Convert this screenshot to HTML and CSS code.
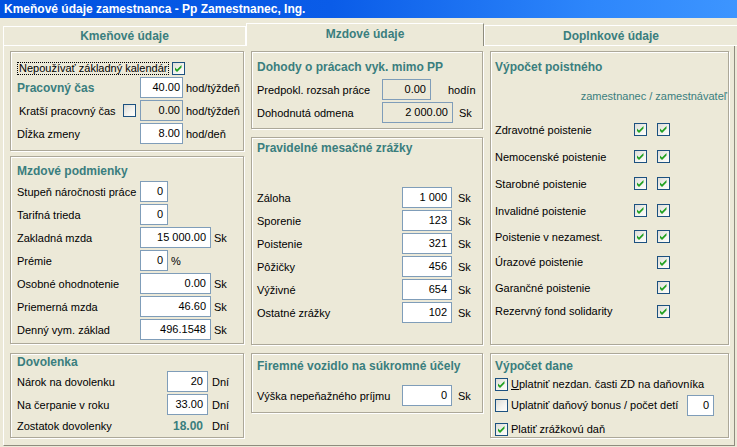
FILE: index.html
```html
<!DOCTYPE html>
<html lang="sk">
<head>
<meta charset="utf-8">
<title>Kmeňové údaje zamestnanca</title>
<link rel="stylesheet" href="styles.css">
</head>
<body>
<div class="titlebar">Kmeňové údaje zamestnanca - Pp Zamestnanec, Ing.</div>
<div class="tabs">
  <div class="tab tab-1">Kmeňové údaje</div>
  <div class="tab tab-2">Mzdové údaje</div>
  <div class="tab tab-3">Doplnkové údaje</div>
</div>
<div class="panel">
  <div class="col col-1">
    <div class="group g-kmen">
      <div class="row row-check">
        <span class="focus">Nepoužívať základný kalendár</span>
        <span class="cb cb-after"><svg viewBox="0 0 11 11" width="11" height="11"><path d="M2 4.5 L4 6.5 L8.5 2 L8.5 4.5 L4 9 L2 7 Z" fill="#21a121"/></svg></span>
      </div>
      <div class="row"><span class="lbl w123 head">Pracovný čas</span><span class="inp w43 tight">40.00</span><span class="unit">hod/týždeň</span></div>
      <div class="row"><span class="lbl w123 lbl-cb"><span class="ind">Kratší pracovný čas</span><span class="cb"></span></span><span class="inp w43 tight dis">0.00</span><span class="unit">hod/týždeň</span></div>
      <div class="row"><span class="lbl w123">Dĺžka zmeny</span><span class="inp w43 tight">8.00</span><span class="unit">hod/deň</span></div>
    </div>
    <div class="group g-podm">
      <div class="gt">Mzdové podmienky</div>
      <div class="row"><span class="lbl w123">Stupeň náročnosti práce</span><span class="inp w28">0</span></div>
      <div class="row"><span class="lbl w123">Tarifná trieda</span><span class="inp w28">0</span></div>
      <div class="row"><span class="lbl w123">Zakladná mzda</span><span class="inp w70">15 000.00</span><span class="unit">Sk</span></div>
      <div class="row"><span class="lbl w123">Prémie</span><span class="inp w28">0</span><span class="unit">%</span></div>
      <div class="row"><span class="lbl w123">Osobné ohodnotenie</span><span class="inp w70">0.00</span><span class="unit">Sk</span></div>
      <div class="row"><span class="lbl w123">Priemerná mzda</span><span class="inp w70">46.60</span><span class="unit">Sk</span></div>
      <div class="row"><span class="lbl w123">Denný vym. základ</span><span class="inp w70">496.1548</span><span class="unit">Sk</span></div>
    </div>
    <div class="group g-dov">
      <div class="gt">Dovolenka</div>
      <div class="row"><span class="lbl w150">Nárok na dovolenku</span><span class="inp w41">20</span><span class="unit u4">Dní</span></div>
      <div class="row"><span class="lbl w150">Na čerpanie v roku</span><span class="inp w41">33.00</span><span class="unit u4">Dní</span></div>
      <div class="row row-last"><span class="lbl w150">Zostatok dovolenky</span><span class="val w41">18.00</span><span class="unit u4">Dní</span></div>
    </div>
  </div>

  <div class="col col-2">
    <div class="group g-doh">
      <div class="gt">Dohody o prácach vyk. mimo PP</div>
      <div class="row"><span class="lbl w125">Predpokl. rozsah práce</span><span class="inp w49 dis">0.00</span><span class="unit u17">hodín</span></div>
      <div class="row"><span class="lbl w125">Dohodnutá odmena</span><span class="inp w70 dis">2 000.00</span><span class="unit u6">Sk</span></div>
    </div>
    <div class="group g-zraz">
      <div class="gt">Pravidelné mesačné zrážky</div>
      <div class="row"><span class="lbl w145">Záloha</span><span class="inp w50">1 000</span><span class="unit u6">Sk</span></div>
      <div class="row"><span class="lbl w145">Sporenie</span><span class="inp w50">123</span><span class="unit u6">Sk</span></div>
      <div class="row"><span class="lbl w145">Poistenie</span><span class="inp w50">321</span><span class="unit u6">Sk</span></div>
      <div class="row"><span class="lbl w145">Pôžičky</span><span class="inp w50">456</span><span class="unit u6">Sk</span></div>
      <div class="row"><span class="lbl w145">Výživné</span><span class="inp w50">654</span><span class="unit u6">Sk</span></div>
      <div class="row"><span class="lbl w145">Ostatné zrážky</span><span class="inp w50">102</span><span class="unit u6">Sk</span></div>
    </div>
    <div class="group g-voz">
      <div class="gt">Firemné vozidlo na súkromné účely</div>
      <div class="row"><span class="lbl w145">Výška nepeňažného príjmu</span><span class="inp w50">0</span><span class="unit u6">Sk</span></div>
    </div>
  </div>

  <div class="col col-3">
    <div class="group g-poist">
      <div class="gt">Výpočet poistného</div>
      <div class="sub">zamestnanec / zamestnávateľ</div>
      <div class="rows-p">
        <div class="row-p"><span class="lbl w139">Zdravotné poistenie</span><span class="cb"><svg viewBox="0 0 11 11" width="11" height="11"><path d="M2 4.5 L4 6.5 L8.5 2 L8.5 4.5 L4 9 L2 7 Z" fill="#21a121"/></svg></span><span class="cb cb-2"><svg viewBox="0 0 11 11" width="11" height="11"><path d="M2 4.5 L4 6.5 L8.5 2 L8.5 4.5 L4 9 L2 7 Z" fill="#21a121"/></svg></span></div>
        <div class="row-p"><span class="lbl w139">Nemocenské poistenie</span><span class="cb"><svg viewBox="0 0 11 11" width="11" height="11"><path d="M2 4.5 L4 6.5 L8.5 2 L8.5 4.5 L4 9 L2 7 Z" fill="#21a121"/></svg></span><span class="cb cb-2"><svg viewBox="0 0 11 11" width="11" height="11"><path d="M2 4.5 L4 6.5 L8.5 2 L8.5 4.5 L4 9 L2 7 Z" fill="#21a121"/></svg></span></div>
        <div class="row-p"><span class="lbl w139">Starobné poistenie</span><span class="cb"><svg viewBox="0 0 11 11" width="11" height="11"><path d="M2 4.5 L4 6.5 L8.5 2 L8.5 4.5 L4 9 L2 7 Z" fill="#21a121"/></svg></span><span class="cb cb-2"><svg viewBox="0 0 11 11" width="11" height="11"><path d="M2 4.5 L4 6.5 L8.5 2 L8.5 4.5 L4 9 L2 7 Z" fill="#21a121"/></svg></span></div>
        <div class="row-p"><span class="lbl w139">Invalidné poistenie</span><span class="cb"><svg viewBox="0 0 11 11" width="11" height="11"><path d="M2 4.5 L4 6.5 L8.5 2 L8.5 4.5 L4 9 L2 7 Z" fill="#21a121"/></svg></span><span class="cb cb-2"><svg viewBox="0 0 11 11" width="11" height="11"><path d="M2 4.5 L4 6.5 L8.5 2 L8.5 4.5 L4 9 L2 7 Z" fill="#21a121"/></svg></span></div>
        <div class="row-p"><span class="lbl w139">Poistenie v nezamest.</span><span class="cb"><svg viewBox="0 0 11 11" width="11" height="11"><path d="M2 4.5 L4 6.5 L8.5 2 L8.5 4.5 L4 9 L2 7 Z" fill="#21a121"/></svg></span><span class="cb cb-2"><svg viewBox="0 0 11 11" width="11" height="11"><path d="M2 4.5 L4 6.5 L8.5 2 L8.5 4.5 L4 9 L2 7 Z" fill="#21a121"/></svg></span></div>
        <div class="row-p"><span class="lbl w139">Úrazové poistenie</span><span class="cb cb-none"></span><span class="cb cb-2"><svg viewBox="0 0 11 11" width="11" height="11"><path d="M2 4.5 L4 6.5 L8.5 2 L8.5 4.5 L4 9 L2 7 Z" fill="#21a121"/></svg></span></div>
        <div class="row-p"><span class="lbl w139">Garančné poistenie</span><span class="cb cb-none"></span><span class="cb cb-2"><svg viewBox="0 0 11 11" width="11" height="11"><path d="M2 4.5 L4 6.5 L8.5 2 L8.5 4.5 L4 9 L2 7 Z" fill="#21a121"/></svg></span></div>
        <div class="row-p"><span class="lbl w139">Rezervný fond solidarity</span><span class="cb cb-none"></span><span class="cb cb-2"><svg viewBox="0 0 11 11" width="11" height="11"><path d="M2 4.5 L4 6.5 L8.5 2 L8.5 4.5 L4 9 L2 7 Z" fill="#21a121"/></svg></span></div>
      </div>
    </div>
    <div class="group g-dan">
      <div class="gt">Výpočet dane</div>
      <div class="row row-d1"><span class="cb"><svg viewBox="0 0 11 11" width="11" height="11"><path d="M2 4.5 L4 6.5 L8.5 2 L8.5 4.5 L4 9 L2 7 Z" fill="#21a121"/></svg></span><span class="cb-lbl"><u>U</u>platniť nezdan. časti ZD na daňovníka</span></div>
      <div class="row row-d2"><span class="cb"></span><span class="cb-lbl w176">Uplatniť daňový bonus / počet detí</span><span class="inp w27">0</span></div>
      <div class="row row-d3"><span class="cb"><svg viewBox="0 0 11 11" width="11" height="11"><path d="M2 4.5 L4 6.5 L8.5 2 L8.5 4.5 L4 9 L2 7 Z" fill="#21a121"/></svg></span><span class="cb-lbl">Platiť zrážkovú daň</span></div>
    </div>
  </div>
</div>
</body>
</html>
```

FILE: styles.css
```css
* { box-sizing: border-box; }
html, body { margin: 0; padding: 0; }
body {
  width: 737px;
  height: 447px;
  overflow: hidden;
  background: #ece9d8;
  font-family: "Liberation Sans", Arial, sans-serif;
  font-size: 11px;
  color: #000;
}

.titlebar {
  height: 18px;
  line-height: 18px;
  padding-left: 4px;
  color: #fff;
  font-weight: bold;
  font-size: 12px;
  white-space: nowrap;
  background: linear-gradient(to right, #0052e0 0%, #0a5ce8 45%, #2d86fb 80%, #3d95ff 100%);
}

.tabs {
  display: flex;
  align-items: flex-end;
  height: 23px;
  margin-top: 5px;
  padding-left: 3px;
}
.tab {
  display: flex;
  align-items: center;
  justify-content: center;
  font-weight: bold;
  font-size: 12px;
  color: #3a7e7e;
  border-top: 1px solid #fff;
  border-left: 1px solid #fff;
  white-space: nowrap;
}
.tab-1 { width: 243px; height: 20px; border-right: 1px solid #fff; border-bottom: 1px solid #fff; }
.tab-2 { width: 238px; height: 23px; border-right: 1px solid #8e8c7e; padding-bottom: 2px; }
.tab-3 { width: 253px; height: 21px; border-bottom: 1px solid #fff; }

.panel {
  display: flex;
  gap: 7px;
  width: 732px;
  height: 400px;
  margin-left: 3px;
  padding: 5px 0 0 6px;
  border-left: 1px solid #fff;
  border-right: 1px solid #8e8c7e;
  border-bottom: 1px solid #8e8c7e;
}
.col { display: flex; flex-direction: column; }
.col-1 { width: 234px; }
.col-2 { width: 232px; }
.col-3 { width: 239px; }

.group {
  border: 1px solid #aca899;
  box-shadow: inset 1px 1px 0 #fff, 1px 1px 0 #fff;
  flex: none;
}
.col-1 .group { padding-left: 6px; }
.col-2 .group { padding-left: 5px; }
.col-3 .group { padding-left: 4px; }

.gt {
  font-weight: bold;
  font-size: 12px;
  color: #3a7e7e;
  line-height: 16px;
  height: 16px;
  white-space: nowrap;
}

.row {
  display: flex;
  align-items: center;
  height: 23px;
  white-space: nowrap;
}

.lbl { flex: none; white-space: nowrap; }
.w123 { width: 123px; }
.w125 { width: 125px; }
.w139 { width: 139px; }
.w145 { width: 145px; }
.w150 { width: 150px; }
.w176 { width: 176px; }

.head { font-weight: bold; font-size: 12px; color: #3a7e7e; }
.lbl-cb { display: flex; align-items: center; }
.lbl-cb .ind { padding-left: 2px; }
.lbl-cb .cb { margin-left: auto; margin-right: 4px; }

.inp {
  flex: none;
  display: block;
  height: 21px;
  line-height: 19px;
  border: 1px solid #7f9db9;
  background: #fff;
  text-align: right;
  padding-right: 4px;
}
.inp.tight { padding-right: 2px; }
.inp.dis { background: #ece9d8; }
.w27 { width: 27px; }
.w28 { width: 28px; }
.w41 { width: 41px; }
.w43 { width: 43px; }
.w49 { width: 49px; }
.w50 { width: 50px; }
.w70 { width: 71px; }

.val {
  flex: none;
  text-align: right;
  padding-right: 5px;
  font-weight: bold;
  font-size: 12px;
  color: #3a7e7e;
}

.unit { margin-left: 3px; }
.unit.u4 { margin-left: 4px; }
.unit.u6 { margin-left: 6px; }
.unit.u17 { margin-left: 17px; }

.cb {
  flex: none;
  display: inline-flex;
  align-items: center;
  justify-content: center;
  width: 13px;
  height: 13px;
  border: 1px solid #1c5180;
  background: linear-gradient(135deg, #dcdcd7 0%, #f4f4f0 60%, #fdfdfb 100%);
}
.cb svg { display: block; }
.cb-none { visibility: hidden; }
.cb-2 { margin-left: 10px; }
.cb-after { margin-left: 3px; }
.cb-lbl { margin-left: 3px; white-space: nowrap; }

.focus {
  border: 1px dotted #000;
  line-height: 11px;
  padding: 0 1px;
}

/* Kmeňové údaje */
.g-kmen { height: 100px; padding-top: 8px; }
.g-kmen .row-check { height: 16px; }

/* Mzdové podmienky */
.g-podm { height: 188px; margin-top: 5px; padding-top: 6px; }
.g-podm .gt { height: 17px; line-height: 17px; }

/* Dovolenka */
.g-dov { height: 85px; margin-top: 9px; padding-top: 0; }
.g-dov .gt { height: 16px; }
.g-dov .row-last { height: 20px; }

/* Dohody */
.g-doh { height: 78px; padding-top: 7px; }
.g-doh .gt { margin-bottom: 3px; }

/* Pravidelné zrážky */
.g-zraz { height: 208px; margin-top: 8px; padding-top: 2px; }
.g-zraz .gt { margin-bottom: 30px; }

/* Firemné vozidlo */
.g-voz { height: 60px; margin-top: 8px; padding-top: 4px; }
.g-voz .gt { margin-bottom: 10px; }

/* Výpočet poistného */
.g-poist { height: 294px; padding-top: 7px; padding-right: 1px; }
.sub {
  margin-top: 13px;
  line-height: 16px;
  text-align: right;
  color: #3a7e7e;
  white-space: nowrap;
}
.rows-p { margin-top: 12px; }
.row-p { display: flex; align-items: center; height: 27px; white-space: nowrap; }
.row-p:nth-child(5) { height: 25px; }
.row-p:nth-child(6) { height: 26px; }
.row-p:nth-child(7) { height: 25px; }
.row-p:nth-child(8) { height: 22px; }

/* Výpočet dane */
.g-dan { height: 85px; margin-top: 8px; padding-top: 4px; }
.g-dan .row-d1 { height: 20px; }
.g-dan .row-d2 { height: 22px; }
.g-dan .row-d3 { height: 20px; padding-top: 6px; }
.g-dan .row-d2 .inp { margin-left: 0; }
```
